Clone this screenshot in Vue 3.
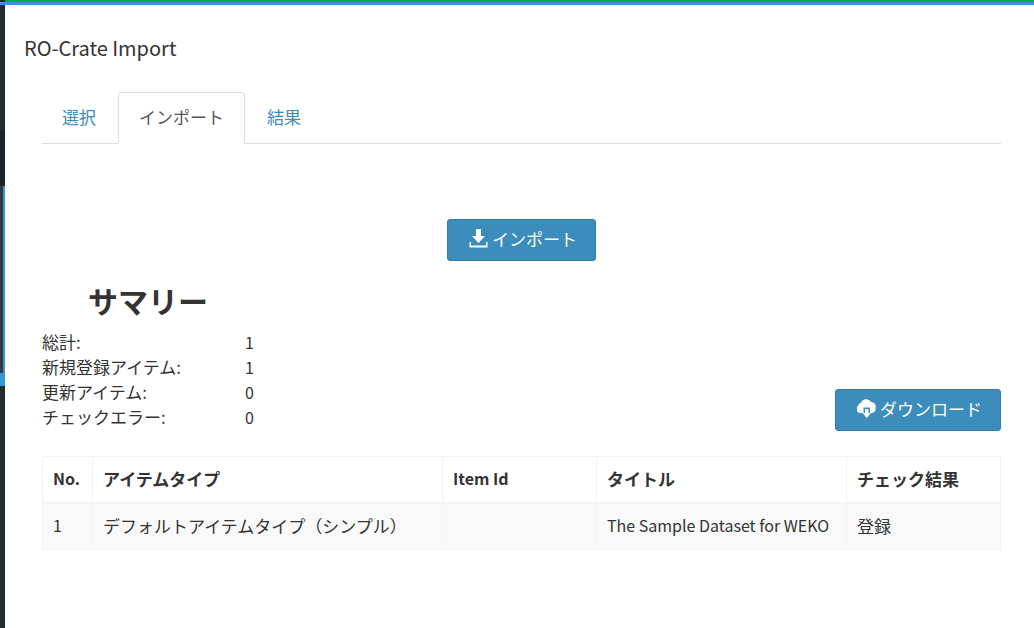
<script setup>
import { ref } from 'vue'

const tabs = ['選択', 'インポート', '結果']
const active = ref(1)
const summary = [
  { label: '総計:', value: 1 },
  { label: '新規登録アイテム:', value: 1 },
  { label: '更新アイテム:', value: 0 },
  { label: 'チェックエラー:', value: 0 },
]
const rows = [
  { no: 1, type: 'デフォルトアイテムタイプ（シンプル）', id: '', title: 'The Sample Dataset for WEKO', result: '登録' },
]
</script>

<template>
  <div class="page">
    <div class="topbar"><span class="topbar-logo"></span></div>
    <div class="body">
      <aside class="sidebar">
        <div class="side-top"></div>
        <div class="side-header"></div>
        <div class="side-menu"></div>
        <div class="side-active"></div>
      </aside>
      <main class="content">
        <h1>RO-Crate Import</h1>
        <div class="panel">
          <nav class="tabs">
            <a
              v-for="(tab, i) in tabs"
              :key="tab"
              href="#"
              :class="['tab', { active: i === active }]"
              @click.prevent="active = i"
            >{{ tab }}</a>
          </nav>
          <div class="import-row">
            <button type="button" class="btn">
              <svg width="19" height="19" viewBox="0 0 19 19" aria-hidden="true">
                <path fill="#fff" d="M7 0h5v7h4l-6.500 7L3 7h4zM0.500 13H2v3.500h15V13h1.500v5.500h-18z" />
              </svg>
              <span>インポート</span>
            </button>
          </div>
          <div class="summary-row">
            <section>
              <h2>サマリー</h2>
              <dl>
                <div v-for="item in summary" :key="item.label" class="stat">
                  <dt>{{ item.label }}</dt>
                  <dd>{{ item.value }}</dd>
                </div>
              </dl>
            </section>
            <button type="button" class="btn">
              <svg width="19" height="19" viewBox="0 0 19 19" aria-hidden="true">
                <path fill="#fff" d="M4 14A4 4 0 0 1 1.500 6.500 2.500 2.500 0 0 1 4 4a5.500 5.500 0 0 1 10-1 4.500 4.500 0 0 1 4.500 6A4 4 0 0 1 15 14h-2V8.500H6.500V14z" />
                <path fill="#fff" d="M8 10h3.500v4h2.500l-4.250 5L5.500 14H8z" />
              </svg>
              <span>ダウンロード</span>
            </button>
          </div>
          <table>
            <colgroup>
              <col class="c-no"><col class="c-type"><col class="c-id"><col class="c-title"><col class="c-result">
            </colgroup>
            <thead>
              <tr>
                <th class="latin">No.</th>
                <th>アイテムタイプ</th>
                <th class="latin">Item Id</th>
                <th>タイトル</th>
                <th>チェック結果</th>
              </tr>
            </thead>
            <tbody>
              <tr v-for="row in rows" :key="row.no">
                <td class="latin">{{ row.no }}</td>
                <td>{{ row.type }}</td>
                <td>{{ row.id }}</td>
                <td class="latin">{{ row.title }}</td>
                <td>{{ row.result }}</td>
              </tr>
            </tbody>
          </table>
        </div>
      </main>
    </div>
  </div>
</template>

<style>
body {
  margin: 0;
  background: #fff;
}
</style>

<style scoped>
.page {
  min-height: 100vh;
  display: flex;
  flex-direction: column;
  font-family: "Noto Sans CJK JP", sans-serif;
  font-size: 17px;
  line-height: 25px;
  color: #333;
}
.topbar {
  height: 2px;
  background: #00a65a;
  border-bottom: 3px solid #3c95d1;
}
.topbar-logo {
  display: block;
  width: 5px;
  height: 2px;
  background: #222d32;
}
.body {
  flex: 1;
  display: flex;
}
.sidebar {
  flex: none;
  width: 5px;
  background: #222d32;
}
.side-top { height: 126px; }
.side-header {
  height: 55px;
  background: #1c232c;
}
.side-menu {
  height: 187px;
  box-sizing: border-box;
  background: #2f3b40;
  border-right: 2px solid #3c95d1;
}
.side-active {
  height: 13px;
  background: #3c95d1;
}
.content {
  flex: 1;
  min-width: 0;
  padding: 28px 33px 24px 19px;
}
h1 {
  margin: 0;
  font-size: 20px;
  font-weight: 400;
  line-height: 30px;
}
.panel { padding: 29px 0 0 18px; }
.tabs {
  display: flex;
  border-bottom: 1px solid #ddd;
}
.tab {
  box-sizing: border-box;
  height: 52px;
  margin: 0 1px -1px 0;
  padding: 11px 20px;
  border: 1px solid transparent;
  border-radius: 4px 4px 0 0;
  color: #3c8dbc;
  text-decoration: none;
}
.tab:first-child { padding-left: 19px; }
.tab.active {
  border-color: #ddd #ddd #fff;
  background: #fff;
  color: #555;
}
.import-row {
  display: flex;
  justify-content: center;
  padding-top: 75px;
}
.btn {
  display: flex;
  align-items: center;
  gap: 4px;
  height: 42px;
  padding: 0 18px 4px 21px;
  border: 1px solid #367fa9;
  border-radius: 3px;
  background: #3c8dbc;
  color: #fff;
  font: inherit;
  cursor: pointer;
}
.summary-row {
  display: flex;
  justify-content: space-between;
  align-items: flex-end;
  padding-top: 21px;
}
h2 {
  margin: 0 0 11px 46px;
  font-size: 30px;
  line-height: 36px;
  font-weight: 700;
}
dl { margin: 0 0 2px; }
.stat {
  display: flex;
}
dt { width: 203px; }
dd {
  margin: 0;
  font-size: 16px;
  line-height: 26px;
  height: 25px;
}
table {
  width: 100%;
  margin-top: 25px;
  table-layout: fixed;
  border-collapse: collapse;
  border: 1px solid #f4f4f4;
}
.c-no { width: 50px; }
.c-type { width: 350px; }
.c-id { width: 154px; }
.c-title { width: 250px; }
th, td {
  padding: 9px 10px 11px;
  border: 1px solid #f4f4f4;
  text-align: left;
}
th { border-bottom-width: 2px; }
td { background: #f9f9f9; }
.latin { font-size: 16px; }
</style>
